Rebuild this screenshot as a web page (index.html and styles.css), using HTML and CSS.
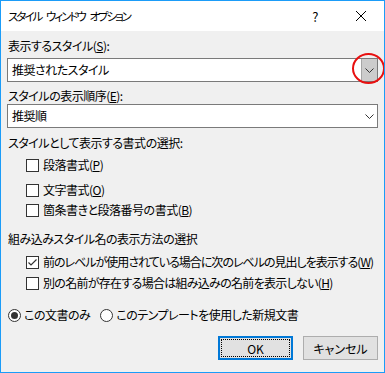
FILE: index.html
```html
<!DOCTYPE html>
<html lang="ja">
<head>
  <meta charset="UTF-8" />
  <title>スタイル ウィンドウ オプション</title>
  <link rel="stylesheet" href="styles.css">
</head>
<body>
  <div class="window">
    <!-- タイトルバー -->
    <div class="titlebar">
      <span class="title">スタイル ウィンドウ オプション</span>
      <span class="tb-btn help">?</span>
      <span class="tb-btn close">
        <svg width="10" height="10" viewBox="0 0 10 10"><path d="M0 0L10 10M10 0L0 10" stroke="#000" stroke-width="1" fill="none"/></svg>
      </span>
    </div>

    <div class="content">
      <div class="label first">表示するスタイル(<u>S</u>):</div>
      <div class="combo active">
        <span class="combo-text">推奨されたスタイル</span>
        <span class="combo-btn">
          <svg width="9" height="5" viewBox="0 0 9 5"><path d="M0.5 0.5L4.5 4.5L8.5 0.5" stroke="#333" fill="none"/></svg>
        </span>
        <span class="marker"></span>
      </div>

      <div class="label second">スタイルの表示順序(<u>E</u>):</div>
      <div class="combo">
        <span class="combo-text">推奨順</span>
        <span class="combo-btn">
          <svg width="9" height="5" viewBox="0 0 9 5"><path d="M0.5 0.5L4.5 4.5L8.5 0.5" stroke="#333" fill="none"/></svg>
        </span>
      </div>

      <div class="label group">スタイルとして表示する書式の選択:</div>
      <label class="check r1"><span class="box"></span>段落書式(<u>P</u>)</label>
      <label class="check r2"><span class="box"></span>文字書式(<u>O</u>)</label>
      <label class="check r3"><span class="box"></span>箇条書きと段落番号の書式(<u>B</u>)</label>

      <div class="label group2">組み込みスタイル名の表示方法の選択</div>
      <label class="check r4 long"><span class="box">
        <svg width="11" height="11" viewBox="0 0 11 11"><path d="M1.5 5.5L4 8L9.5 2.5" stroke="#333" stroke-width="1.2" fill="none"/></svg>
      </span>前のレベルが使用されている場合に次のレベルの見出しを表示する(<u>W</u>)</label>
      <label class="check r5 mid"><span class="box"></span>別の名前が存在する場合は組み込みの名前を表示しない(<u>H</u>)</label>

      <div class="radios">
        <label class="radio"><span class="dot checked"></span>この文書のみ</label>
        <label class="radio"><span class="dot"></span>このテンプレートを使用した新規文書</label>
      </div>

      <div class="buttons">
        <button class="btn default"><span class="focus">OK</span></button>
        <button class="btn">キャンセル</button>
      </div>
    </div>
  </div>
</body>
</html>
```

FILE: styles.css
```css
* {
  box-sizing: border-box;
  margin: 0;
  padding: 0;
}

body {
  font-family: 'Noto Sans CJK JP', 'Noto Sans', sans-serif;
  font-size: 12px;
  font-feature-settings: "palt";
  letter-spacing: -0.5px;
  white-space: nowrap;
  color: #000;
  background: #fff;
}

.window {
  width: 385px;
  height: 373px;
  border: 1px solid #1b9cf8;
  background-color: #f0f0f0;
  display: flex;
  flex-direction: column;
  overflow: hidden;
}

.titlebar {
  height: 30px;
  background-color: #fff;
  display: flex;
  align-items: center;
  padding-left: 7px;
}

.title {
  flex: 1;
  font-size: 11.5px;
  line-height: 16px;
  letter-spacing: -2px;
  word-spacing: 4px;
}

.tb-btn {
  width: 46px;
  height: 30px;
  display: flex;
  align-items: center;
  justify-content: center;
}

.help {
  font-size: 13px;
}

.content {
  padding: 0 6px;
}

.label {
  line-height: 16px;
  padding-left: 1px;
}

.label.first {
  margin-top: 7px;
  margin-bottom: 4px;
}

.label.second {
  margin-top: 6px;
  margin-bottom: 0;
}

.label.group {
  margin-top: 7px;
}

.label.group2 {
  margin-top: 13px;
}

.combo {
  position: relative;
  height: 24px;
  background-color: #fff;
  border: 1px solid #7a7a7a;
  display: flex;
  align-items: center;
}

.combo-text {
  flex: 1;
  padding-left: 4px;
  line-height: 16px;
}

.combo-btn {
  width: 16px;
  height: 22px;
  display: flex;
  align-items: center;
  justify-content: center;
}

.combo.active .combo-btn {
  background-color: #cccccc;
  border-left: 1px solid #a6a6a6;
}

/* 赤丸の強調 */
.marker {
  position: absolute;
  right: -8px;
  top: -6px;
  width: 33px;
  height: 31px;
  border: 2px solid #e81010;
  border-radius: 50%;
}

.check {
  display: flex;
  align-items: center;
  line-height: 16px;
  padding-left: 19px;
}

.check.long {
  letter-spacing: -1px;
}

.check.mid {
  letter-spacing: -0.7px;
}

.check .box {
  width: 13px;
  height: 13px;
  border: 1px solid #333;
  background-color: #fff;
  margin-right: 4px;
  display: flex;
  align-items: center;
  justify-content: center;
}

.r1 { margin-top: 6px; }
.r2 { margin-top: 9px; }
.r3 { margin-top: 4px; }
.r4 { margin-top: 7px; }
.r5 { margin-top: 5px; }

.radios {
  display: flex;
  gap: 10px;
  margin-top: 16px;
  padding-left: 1px;
}

.radio {
  display: flex;
  align-items: center;
  line-height: 16px;
}

.radio .dot {
  width: 13px;
  height: 13px;
  border: 1px solid #333;
  border-radius: 50%;
  background-color: #fff;
  margin-right: 3px;
  display: flex;
  align-items: center;
  justify-content: center;
}

.radio .dot.checked::after {
  content: "";
  width: 7px;
  height: 7px;
  border-radius: 50%;
  background-color: #333;
}

.buttons {
  display: flex;
  justify-content: flex-end;
  gap: 10px;
  margin-top: 13px;
}

.btn {
  width: 75px;
  height: 24px;
  font: inherit;
  letter-spacing: 0;
  color: #000;
  background-color: #e1e1e1;
  border: 1px solid #adadad;
  display: flex;
  align-items: center;
  justify-content: center;
}

.btn.default {
  border: 2px solid #0078d7;
  padding: 1px;
}

.btn .focus {
  width: 100%;
  height: 100%;
  border: 1px dotted #000;
  display: flex;
  align-items: center;
  justify-content: center;
}
```
